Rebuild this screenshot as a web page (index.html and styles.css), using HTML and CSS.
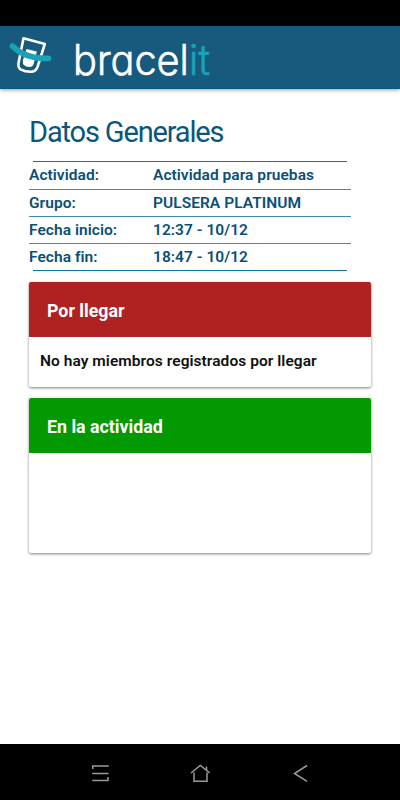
FILE: index.html
```html
<!DOCTYPE html>
<html lang="es">
<head>
    <meta charset="UTF-8">
    <meta name="viewport" content="width=device-width, initial-scale=1.0">
    <title>Bracelit</title>
    <link rel="stylesheet" href="styles.css">
</head>
<body>
    <div class="status-bar"></div>
    <header class="navbar">
        <svg class="logo" width="212" height="62" viewBox="0 0 212 62">
            <path d="M23.500 12.300 L44.800 18 L37.500 41 Q35.500 46 30.500 45.800 Q25 45.800 20.500 43.300 Q17.800 41.500 18.500 37 Z" fill="none" stroke="#fff" stroke-width="2.600" stroke-linejoin="round"/>
            <path d="M26.500 23 L36.800 25.500 L33.800 37.500 Q32.800 41 29.500 41 Q26 41 23.500 38.800 Q22.500 37 23 34 Z" fill="#fff"/>
            <path d="M12.500 20 Q25 33 48.300 32.300" fill="none" stroke="#1ba1b8" stroke-width="5.800" stroke-linecap="round"/>
            <text class="brand" x="73" y="49" textLength="137" lengthAdjust="spacingAndGlyphs">bracel<tspan class="brand-it">it</tspan></text>
        </svg>
    </header>

    <main class="content">
        <h1>Datos Generales</h1>
        <dl class="details">
            <div class="row"><dt>Actividad:</dt><dd>Actividad para pruebas</dd></div>
            <div class="row"><dt>Grupo:</dt><dd>PULSERA PLATINUM</dd></div>
            <div class="row"><dt>Fecha inicio:</dt><dd>12:37 - 10/12</dd></div>
            <div class="row"><dt>Fecha fin:</dt><dd>18:47 - 10/12</dd></div>
        </dl>
        <section class="card pending">
            <h2>Por llegar</h2>
            <p>No hay miembros registrados por llegar</p>
        </section>
        <section class="card active">
            <h2>En la actividad</h2>
        </section>
    </main>

    <nav class="system-bar">
        <svg width="20" height="20" viewBox="0 0 20 20">
            <path d="M2.700 5V2H18.800M2.300 9.500H18.500M2.300 16.500H18V13"/>
        </svg>
        <svg width="20" height="20" viewBox="0 0 20 20">
            <path d="M1 9L10.300 1.500L19.700 9M4 8.500V17.300H17V8.500M16.500 6V2.500"/>
        </svg>
        <svg width="20" height="20" viewBox="0 0 20 20">
            <path d="M17 1.500L4.500 9.500L17 17.300"/>
        </svg>
    </nav>
</body>
</html>
```

FILE: styles.css
```css
* {
    box-sizing: border-box;
}
body {
    font-family: Roboto, sans-serif;
    margin: 0;
    min-height: 800px;
    display: flex;
    flex-direction: column;
    background-color: #fff;
}
.status-bar {
    height: 26px;
    background-color: #000;
}
.navbar {
    height: 63px;
    background-color: #185a7d;
    border-bottom: 1px solid #075781;
    box-shadow: 0 1px 4px rgba(0, 0, 0, 0.4);
}
.logo {
    display: block;
}
.brand {
    font-family: Inter, sans-serif;
    font-size: 42px;
    font-weight: 300;
    font-feature-settings: "cv11";
    fill: #fff;
    stroke: #fff;
    stroke-width: 0.6px;
}
.brand-it {
    fill: #1ba1b8;
    stroke: #1ba1b8;
}
.content {
    flex: 1;
    padding: 26px 29px 0;
}
h1 {
    margin: 0 0 11px;
    font-size: 29px;
    line-height: 35px;
    font-weight: 400;
    letter-spacing: -1.15px;
    color: #0a567c;
}
.details {
    display: flex;
    flex-direction: column;
    width: 322px;
    margin: 0 0 11px;
    font-size: 15.5px;
    letter-spacing: 0.05px;
    font-weight: 600;
    color: #0a4f77;
}
/* outer rules are a bit shorter than the row rules */
.details::before,
.details::after {
    content: "";
    height: 1px;
    margin: 0 4px;
    background-color: #0b759a;
}
.row {
    display: flex;
    height: 27px;
    line-height: 27px;
    white-space: nowrap;
}
.row + .row {
    border-top: 1px solid #4387ab;
}
dt {
    width: 124px;
}
dd {
    margin: 0;
}
.card {
    margin-bottom: 11px;
    border-radius: 2px;
    overflow: hidden;
    background-color: #fff;
    box-shadow: 0 1px 3px rgba(0, 0, 0, 0.5);
}
.card h2 {
    margin: 0;
    padding: 2px 18px 0;
    font-size: 17.8px;
    line-height: 53px;
    font-weight: 700;
    color: #fff;
}
.pending {
    height: 105px;
}
.pending h2 {
    background-color: #b02121;
}
.active {
    height: 155px;
}
.active h2 {
    background-color: #029902;
}
.card p {
    margin: 0;
    padding: 0 11px;
    font-size: 15.5px;
    letter-spacing: 0.05px;
    line-height: 48px;
    font-weight: 600;
    color: #111;
    white-space: nowrap;
}
.system-bar {
    height: 56px;
    display: flex;
    justify-content: center;
    align-items: center;
    gap: 80px;
    padding-top: 3px;
    background-color: #000;
}
.system-bar path {
    fill: none;
    stroke: #999;
    stroke-width: 1.5px;
}
```
